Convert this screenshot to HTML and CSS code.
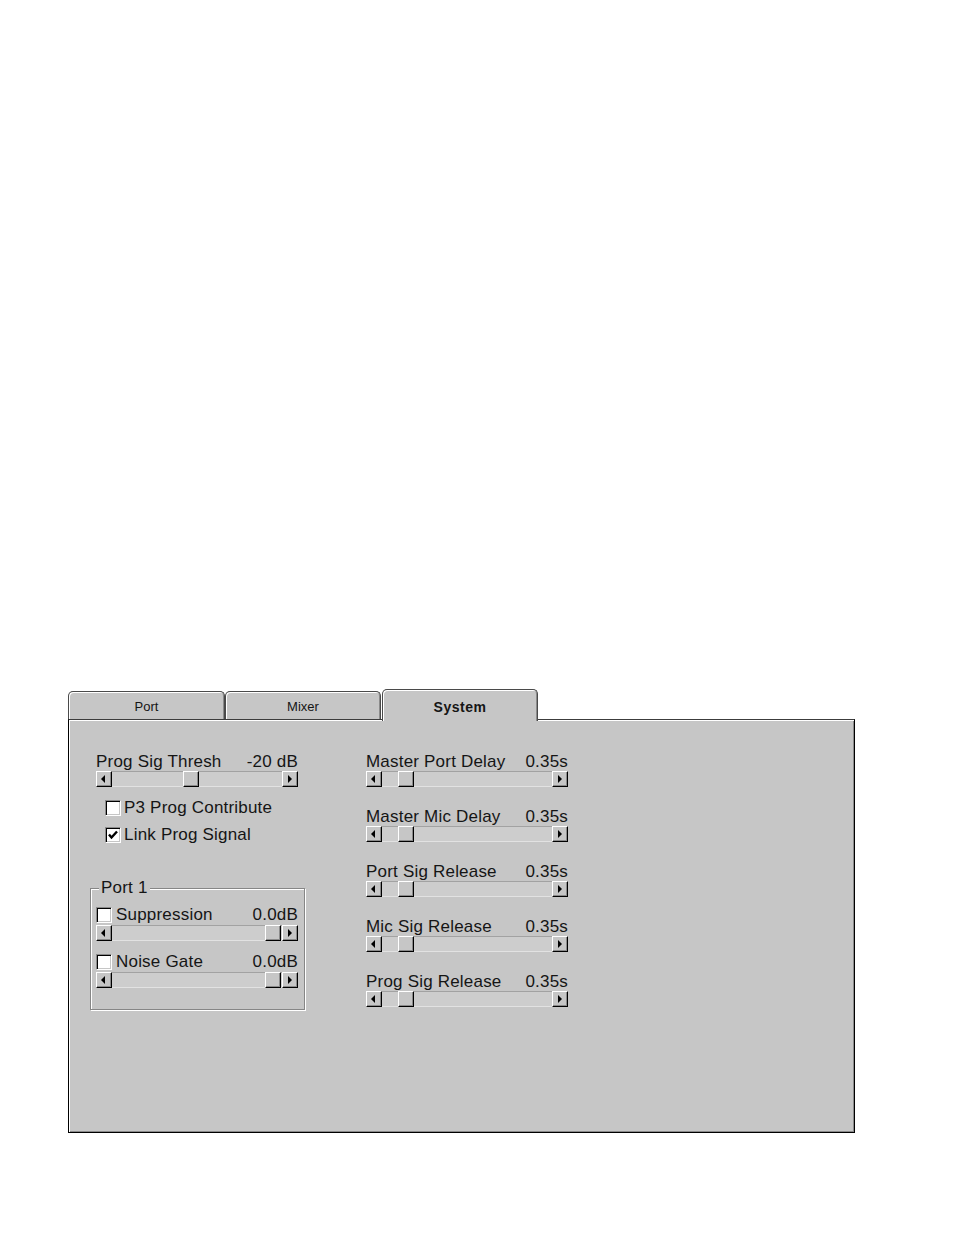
FILE: index.html
```html
<!DOCTYPE html>
<html>
<head>
<meta charset="utf-8">
<link rel="stylesheet" href="styles.css">
</head>
<body>
<div class="tabctl">
  <div class="tabs">
    <div class="tab w157">Port</div>
    <div class="tab w156">Mixer</div>
    <div class="tab w156 active">System</div>
  </div>
  <div class="panel">
    <div class="col">
      <div class="lbl"><span>Prog Sig Thresh</span><span>-20 dB</span></div>
      <div class="sb"><span class="btn"><i class="al"></i></span><span class="track"><span class="thumb" style="margin-left:71px"></span></span><span class="btn"><i class="ar"></i></span></div>
      <div class="chk top1"><span class="box"></span><span>P3 Prog Contribute</span></div>
      <div class="chk top2"><span class="box"><svg width="12" height="12" viewBox="0 0 12 12"><path d="M2 5.5 L4.5 8.5 L10 2.5" fill="none" stroke="#000" stroke-width="2.4"/></svg></span><span>Link Prog Signal</span></div>
      <div class="group">
        <span class="legend">Port 1</span>
        <div class="gchk"><span class="gl"><span class="box"></span><span>Suppression</span></span><span>0.0dB</span></div>
        <div class="sb gsb"><span class="btn"><i class="al"></i></span><span class="track"><span class="thumb" style="margin-left:153px"></span></span><span class="btn"><i class="ar"></i></span></div>
        <div class="gchk g2"><span class="gl"><span class="box"></span><span>Noise Gate</span></span><span>0.0dB</span></div>
        <div class="sb gsb"><span class="btn"><i class="al"></i></span><span class="track"><span class="thumb" style="margin-left:153px"></span></span><span class="btn"><i class="ar"></i></span></div>
      </div>
    </div>
    <div class="col">
      <div class="item">
        <div class="lbl"><span>Master Port Delay</span><span>0.35s</span></div>
        <div class="sb"><span class="btn"><i class="al"></i></span><span class="track"><span class="thumb" style="margin-left:16px"></span></span><span class="btn"><i class="ar"></i></span></div>
      </div>
      <div class="item">
        <div class="lbl"><span>Master Mic Delay</span><span>0.35s</span></div>
        <div class="sb"><span class="btn"><i class="al"></i></span><span class="track"><span class="thumb" style="margin-left:16px"></span></span><span class="btn"><i class="ar"></i></span></div>
      </div>
      <div class="item">
        <div class="lbl"><span>Port Sig Release</span><span>0.35s</span></div>
        <div class="sb"><span class="btn"><i class="al"></i></span><span class="track"><span class="thumb" style="margin-left:16px"></span></span><span class="btn"><i class="ar"></i></span></div>
      </div>
      <div class="item">
        <div class="lbl"><span>Mic Sig Release</span><span>0.35s</span></div>
        <div class="sb"><span class="btn"><i class="al"></i></span><span class="track"><span class="thumb" style="margin-left:16px"></span></span><span class="btn"><i class="ar"></i></span></div>
      </div>
      <div class="item">
        <div class="lbl"><span>Prog Sig Release</span><span>0.35s</span></div>
        <div class="sb"><span class="btn"><i class="al"></i></span><span class="track"><span class="thumb" style="margin-left:16px"></span></span><span class="btn"><i class="ar"></i></span></div>
      </div>
    </div>
  </div>
</div>
</body>
</html>
```
FILE: styles.css
```css
html, body { margin: 0; padding: 0; background: #fff; }
body { font-family: "Liberation Sans", Arial, sans-serif; color: #151515; }

.tabctl { margin: 689px 0 0 68px; width: 787px; }

.tabs { display: flex; align-items: flex-end; height: 30px; }
.tab {
  box-sizing: border-box;
  height: 28px;
  background: #c6c6c6;
  border: 1px solid #4a4a4a;
  border-bottom: none;
  border-radius: 5px 5px 0 0;
  box-shadow: inset 1px 1px #fff, inset -1px 0 #8a8a8a;
  font-size: 13px;
  line-height: 30px;
  text-align: center;
  position: relative;
}
.w157 { width: 157px; }
.w156 { width: 156px; }
.tab.active {
  height: 32px;
  margin-bottom: -2px;
  margin-left: 1px;
  z-index: 1;
  font-weight: bold;
  font-size: 14px;
  letter-spacing: 0.5px;
  line-height: 34px;
}

.panel {
  box-sizing: border-box;
  height: 414px;
  background: #c6c6c6;
  border: 1px solid #3c3c3c;
  border-left-color: #000;
  border-right-color: #000;
  border-bottom-color: #000;
  box-shadow: inset 1px 1px #fff, inset -1px -1px #8a8a8a;
  padding: 32px 0 0 27px;
  display: grid;
  grid-template-columns: 202px 202px;
  column-gap: 68px;
  align-items: start;
  font-size: 17px;
  letter-spacing: 0.2px;
}

.col { display: flex; flex-direction: column; }
.item + .item { margin-top: 20px; }

.lbl { display: flex; justify-content: space-between; line-height: 19px; height: 19px; white-space: nowrap; }

.sb { display: flex; height: 16px; width: 202px; }
.btn {
  box-sizing: border-box;
  flex: 0 0 16px;
  height: 16px;
  background: #c6c6c6;
  border-top: 1px solid #fff;
  border-left: 1px solid #fff;
  border-right: 1px solid #000;
  border-bottom: 1px solid #000;
  box-shadow: inset -1px -1px #8a8a8a;
  display: flex;
  align-items: center;
  justify-content: center;
}
.al, .ar { width: 0; height: 0; border-top: 4px solid transparent; border-bottom: 4px solid transparent; }
.al { border-right: 4px solid #000; margin-right: 2px; }
.ar { border-left: 4px solid #000; margin-left: 0; }
.track {
  box-sizing: border-box;
  flex: 1 1 auto;
  height: 16px;
  background: #cdcdcd;
  border-top: 1px solid #a2a2a2;
  border-bottom: 1px solid #e2e2e2;
  display: flex;
}
.track .thumb {
  box-sizing: border-box;
  flex: 0 0 16px;
  height: 16px;
  margin-top: -1px;
  background: #c6c6c6;
  border-top: 1px solid #fff;
  border-left: 1px solid #fff;
  border-right: 1px solid #000;
  border-bottom: 1px solid #000;
  box-shadow: inset -1px -1px #8a8a8a;
}

.chk { display: flex; align-items: center; height: 19px; line-height: 19px; margin-left: 9px; white-space: nowrap; }
.chk .box { margin-right: 3px; }
.top1 { margin-top: 11px; }
.top2 { margin-top: 8px; }

.box {
  box-sizing: border-box;
  width: 16px;
  height: 16px;
  flex: 0 0 16px;
  background: #fff;
  border-top: 1px solid #8a8a8a;
  border-left: 1px solid #8a8a8a;
  border-right: 1px solid #fff;
  border-bottom: 1px solid #fff;
  box-shadow: inset 1px 1px #000, inset -1px -1px #c6c6c6;
  display: flex;
  align-items: center;
  justify-content: center;
}

.group {
  position: relative;
  box-sizing: border-box;
  margin: 44px 0 0 -6px;
  width: 215px;
  height: 122px;
  border: 1px solid #868686;
  box-shadow: inset 1px 1px #fff, 1px 1px #fff;
  padding: 16px 6px 0 5px;
}
.legend {
  position: absolute;
  top: -11px;
  left: 8px;
  padding: 0 2px;
  background: #c6c6c6;
  line-height: 19px;
}
.gchk { display: flex; justify-content: space-between; align-items: center; height: 19px; line-height: 19px; white-space: nowrap; }
.gl { display: flex; align-items: center; }
.gl .box { margin-right: 4px; }
.gsb { margin-top: 1px; }
.g2 { margin-top: 11px; }
```
